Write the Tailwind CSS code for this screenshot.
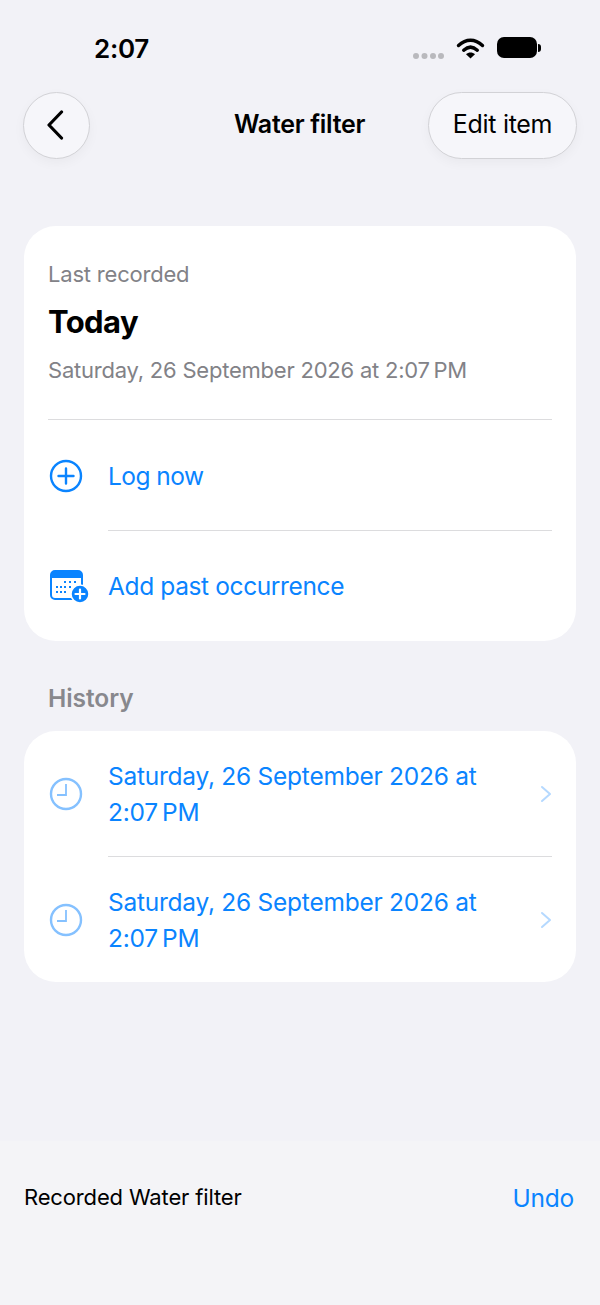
<!DOCTYPE html>
<html lang="en">
<head>
    <meta charset="UTF-8" />
    <title>Water filter</title>
    <script src="https://cdn.jsdelivr.net/npm/@tailwindcss/browser@4"></script>
</head>
<body class="bg-[#f2f2f7] font-['Inter','Liberation_Sans',sans-serif]">
<div class="w-[600px] h-[1305px] overflow-hidden flex flex-col relative">

    <!-- Status bar -->
    <div class="h-[92px] shrink-0 flex items-start justify-between pl-[94px] pr-[59px] pt-[32px]">
        <span class="text-[26px] leading-[34px] font-semibold text-black tracking-[-0.3px]">2:07</span>
        <div class="flex items-start gap-[12px] pt-[5px]">
            <svg width="31" height="12" viewBox="0 0 31 12" class="mt-[13px]" fill="#b9b9bd">
                <circle cx="3" cy="6" r="3"/><circle cx="11.5" cy="6" r="3"/><circle cx="20" cy="6" r="3"/><circle cx="28" cy="6" r="3"/>
            </svg>
            <svg width="29" height="21" viewBox="0 0 28 21" fill="none" class="mt-[1px]">
                <path d="M2 7.5C9.5 0.5 18.5 0.5 26 7.5" stroke="#000" stroke-width="3.4" stroke-linecap="round"/>
                <path d="M7.2 12.2C11.5 8.3 16.5 8.3 20.8 12.2" stroke="#000" stroke-width="3.4" stroke-linecap="round"/>
                <path d="M14 20.5L9.5 16.2C12 14 16 14 18.5 16.2Z" fill="#000"/>
            </svg>
            <div class="flex items-center">
                <div class="w-[40px] h-[21px] rounded-[7px] bg-black"></div>
                <div class="w-[3px] h-[8px] rounded-r-[3px] bg-black ml-[1px]"></div>
            </div>
        </div>
    </div>

    <!-- Nav -->
    <div class="h-[66px] shrink-0 mx-[23px] flex items-center justify-between relative">
        <div class="w-[67px] h-[67px] rounded-full bg-[#f6f6fa] border border-[#d2d2d6] shadow-[0_4px_12px_rgba(0,0,0,0.04)] flex items-center justify-center">
            <svg width="20" height="30" viewBox="0 0 20 30" fill="none" class="-ml-[4px]">
                <path d="M16.5 2L4 15L16.5 28" stroke="#000" stroke-width="3.2" stroke-linecap="round" stroke-linejoin="round"/>
            </svg>
        </div>
        <span class="absolute left-[211px] text-[25px] font-semibold text-black tracking-[-0.3px]">Water filter</span>
        <div class="w-[149px] h-[67px] rounded-full bg-[#f6f6fa] border border-[#d2d2d6] shadow-[0_4px_12px_rgba(0,0,0,0.04)] flex items-center justify-center">
            <span class="text-[25px] text-black tracking-[-0.3px]">Edit item</span>
        </div>
    </div>

    <!-- Last recorded card -->
    <div class="mx-[24px] mt-[68px] h-[415px] shrink-0 bg-white rounded-[32px] px-[24px] flex flex-col">
        <p class="mt-[33px] text-[22px] leading-[30px] text-[#828287] tracking-[-0.2px]">Last recorded</p>
        <p class="mt-[13px] text-[31px] leading-[40px] font-bold text-black tracking-[-0.6px]">Today</p>
        <p class="mt-[12px] text-[22px] leading-[32px] text-[#828287] tracking-[-0.22px]">Saturday, 26 September 2026 at 2:07&#8239;PM</p>
        <div class="mt-[33px] h-[1px] bg-[#dcdcde]"></div>
        <div class="h-[110px] flex items-center gap-[24px]">
            <svg width="36" height="36" viewBox="0 0 36 36" fill="none" class="shrink-0 mt-[1px]">
                <circle cx="18" cy="18" r="15" stroke="#0a84ff" stroke-width="2.4"/>
                <path d="M18 10.5V25.5M10.5 18H25.5" stroke="#0a84ff" stroke-width="2.4" stroke-linecap="round"/>
            </svg>
            <span class="mt-[2px] text-[24.5px] text-[#0a84ff] tracking-[-0.55px]">Log now</span>
        </div>
        <div class="ml-[60px] h-[1px] bg-[#dcdcde]"></div>
        <div class="h-[110px] flex items-center gap-[19px]">
            <svg width="40" height="34" viewBox="0 0 40 34" fill="none" class="shrink-0 ml-[1px]">
                <rect x="2" y="2" width="31" height="28" rx="4" fill="#fff" stroke="#0a84ff" stroke-width="2"/>
                <path d="M2 6a4 4 0 0 1 4-4h23a4 4 0 0 1 4 4v3H2Z" fill="#0a84ff"/>
                <g fill="#0a84ff">
                    <rect x="15" y="12" width="2" height="2"/><rect x="20" y="12" width="2" height="2"/><rect x="25" y="12" width="2" height="2"/>
                    <rect x="7" y="17" width="2" height="2"/><rect x="11" y="17" width="2" height="2"/><rect x="15" y="17" width="2" height="2"/><rect x="20" y="17" width="2" height="2"/>
                    <rect x="7" y="22" width="2" height="2"/><rect x="11" y="22" width="2" height="2"/><rect x="15" y="22" width="2" height="2"/>
                </g>
                <circle cx="31" cy="25" r="9" fill="#0a84ff" stroke="#fff" stroke-width="1.5"/>
                <path d="M31 20.5V29.5M26.5 25H35.5" stroke="#fff" stroke-width="2.2" stroke-linecap="round"/>
            </svg>
            <span class="text-[24.5px] text-[#0a84ff] tracking-[-0.38px]">Add past occurrence</span>
        </div>
    </div>

    <!-- History -->
    <p class="mx-[48px] mt-[41px] text-[24.5px] leading-[32px] font-semibold text-[#88888d] tracking-[-0.05px]">History</p>
    <div class="mx-[24px] mt-[17px] h-[251px] shrink-0 bg-white rounded-[32px] px-[24px] flex flex-col">
        <div class="h-[125px] flex items-center gap-[24px]">
            <svg width="36" height="36" viewBox="0 0 36 36" fill="none" class="shrink-0">
                <circle cx="18" cy="18" r="15" stroke="#85c1ff" stroke-width="2.4"/>
                <path d="M18 8V19H9" stroke="#85c1ff" stroke-width="1.8"/>
            </svg>
            <span class="w-[400px] text-[24.5px] leading-[36px] text-[#0a84ff] tracking-[-0.25px]">Saturday, 26 September 2026 at 2:07&#8239;PM</span>
            <svg width="12" height="18" viewBox="0 0 12 18" fill="none" class="shrink-0 ml-auto">
                <path d="M2 2L10 9L2 16" stroke="#b5d9ff" stroke-width="2" stroke-linecap="round" stroke-linejoin="round"/>
            </svg>
        </div>
        <div class="ml-[60px] h-[1px] bg-[#dcdcde]"></div>
        <div class="h-[125px] flex items-center gap-[24px]">
            <svg width="36" height="36" viewBox="0 0 36 36" fill="none" class="shrink-0">
                <circle cx="18" cy="18" r="15" stroke="#85c1ff" stroke-width="2.4"/>
                <path d="M18 8V19H9" stroke="#85c1ff" stroke-width="1.8"/>
            </svg>
            <span class="w-[400px] text-[24.5px] leading-[36px] text-[#0a84ff] tracking-[-0.25px]">Saturday, 26 September 2026 at 2:07&#8239;PM</span>
            <svg width="12" height="18" viewBox="0 0 12 18" fill="none" class="shrink-0 ml-auto">
                <path d="M2 2L10 9L2 16" stroke="#b5d9ff" stroke-width="2" stroke-linecap="round" stroke-linejoin="round"/>
            </svg>
        </div>
    </div>

    <!-- Undo bar -->
    <div class="mt-auto h-[164px] shrink-0 bg-[#f4f4f7] flex items-start justify-between pl-[24px] pr-[26px] pt-[40px]">
        <span class="-mt-[1px] text-[22px] leading-[34px] text-black tracking-[-0.15px]">Recorded Water filter</span>
        <span class="text-[24.5px] leading-[34px] text-[#0a84ff] tracking-[-0.2px]">Undo</span>
    </div>
</div>
</body>
</html>
